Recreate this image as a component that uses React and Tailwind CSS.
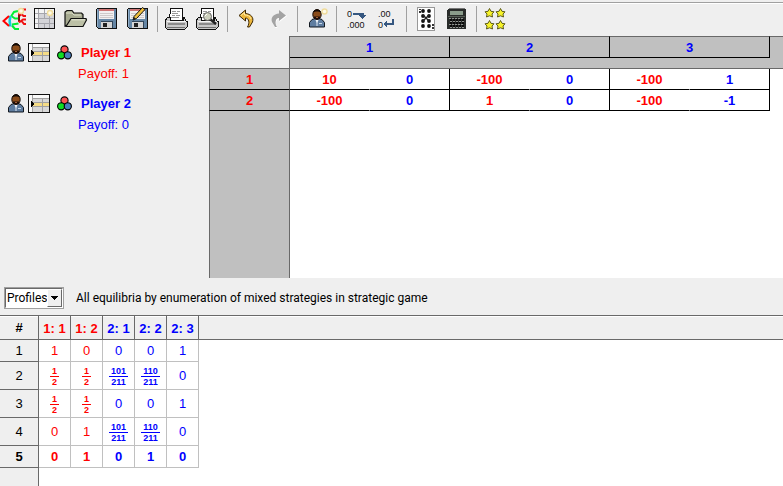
import React from "react";

function Icon({ children, w = 25, h = 25, crisp = true }) {
  return (
    <svg
      width={w}
      height={h}
      viewBox={`0 0 ${w} ${h}`}
      shapeRendering={crisp ? "crispEdges" : "auto"}
      className="block shrink-0"
      aria-hidden="true"
    >
      {children}
    </svg>
  );
}

const Spark = ({ x, y }) => (
  <g shapeRendering="auto">
    <circle cx={x} cy={y} r="3.200" fill="#f0dc9c" />
    <circle cx={x} cy={y} r="1.800" fill="#fffbe6" />
  </g>
);

const TreeIcon = () => (
  <Icon crisp={false}>
    <g fill="none" strokeWidth="2">
      <path d="M9 10.500 L12 6 L16 5 M10 10.500 L13 12.500 H16.500 M10 18.500 L16.500 17.500 M10 19.500 L13 23 H17" stroke="#0e3" />
      <path d="M8.500 10 C7.500 13 7.500 17 8.500 20.500" stroke="#1cd" strokeWidth="2.500" />
      <path d="M7 10 L1.500 15 L7 20" stroke="#f00" />
      <path d="M17 6 V16 M18 10 L20.500 3.500 H24 M20 8.500 L21.500 10 H24 M17 16.500 L21 13.500 H24 M20 15.500 L22 18 H24" stroke="#e11" />
      <path d="M17 9 V15" stroke="#5a1212" strokeWidth="1.500" />
    </g>
    <Spark x={19} y={5} />
  </Icon>
);

const TableIcon = () => (
  <Icon>
    <rect x="2" y="2" width="21" height="21" fill="#111" />
    <rect x="3" y="3" width="19" height="19" fill="#d4d4d8" />
    <path d="M3 3 h19 v4 h-19 z M3 8 h3 v14 h-3 z" fill="#f4f4f4" />
    <path d="M3 7.5 H22 M3 12.5 H22 M3 17.5 H22 M6.5 3 V22 M12.5 3 V12 M12.5 17 V22 M17.5 8 V22" stroke="#a5a5ab" />
    <Spark x={18} y={7} />
  </Icon>
);

const FolderIcon = () => (
  <Icon crisp={false}>
    <path d="M2 20 V6 L4 4.5 H9 L11 7 H18.5 L20 8.500 V13 Z" fill="#a6aa90" stroke="#111" strokeWidth="1.2" />
    <path d="M3 7 H9 L11 9 H18" stroke="#dfe2cc" fill="none" />
    <path d="M3 20.500 L8 12.500 H23 L23.500 14 L20 20.500 Z" fill="#bcc0a6" stroke="#111" strokeWidth="1.2" />
    <path d="M8.500 13.800 H22" stroke="#e6e9d8" />
  </Icon>
);

const Floppy = () => (
  <g>
    <path d="M3 2 H22 L23 3 V22 L22 23 H4 L2 21 V3 Z" fill="#111" />
    <path d="M3 3 H22 V22 H4 L3 21 Z" fill="#6687a6" />
    <path d="M3.5 3 V21" stroke="#92aec8" />
    <rect x="5" y="3" width="15" height="10" fill="#f2f0f0" />
    <rect x="5" y="3" width="15" height="2" fill="#cf7676" />
    <path d="M6 7.500 H19 M6 9.500 H19 M6 11.500 H19" stroke="#cfcaca" />
    <rect x="7" y="16" width="11" height="6" fill="#d6d6d6" />
    <rect x="9" y="17" width="4" height="4" fill="#222" />
    <path d="M18.5 16 V22 M7 15.5 H19" stroke="#32465a" />
  </g>
);

const SaveIcon = () => (
  <Icon>
    <Floppy />
  </Icon>
);

const SaveAsIcon = () => (
  <Icon>
    <Floppy />
    <g shapeRendering="auto">
      <path d="M8 14 L9 10.500 L17.500 1.500 L20 3.500 L11.500 12.500 Z" fill="#f0bf3c" stroke="#111" />
      <path d="M8 14 L9 11 L11 13 Z" fill="#222" />
    </g>
  </Icon>
);

const Printer = () => (
  <g>
    <path d="M7 2 H18 L19 14 H5 Z" fill="#fff" stroke="#111" />
    <path d="M8 5.5 H12 M13 5.5 H16 M8 7.5 H14 M8 9.5 H11 M12 9.5 H16 M7 11.5 H15" stroke="#999" />
    <path d="M4 11 H6 V14 H19 V11 H20 L22 15 H23 V21 L21 23 H3 L1 21 V15 Z" fill="#c8c8c8" stroke="#111" />
    <path d="M3 15.5 H22" stroke="#f5f5f5" />
    <rect x="4" y="17" width="17" height="2" fill="#8b8b8b" />
    <path d="M3 21.500 H21" stroke="#707070" />
  </g>
);

const PrintIcon = () => (
  <Icon>
    <Printer />
  </Icon>
);

const PreviewIcon = () => (
  <Icon>
    <Printer />
    <g shapeRendering="auto">
      <path d="M15 13 L21 18" stroke="#222" strokeWidth="2.500" />
      <circle cx="12.500" cy="10.500" r="4" fill="#cdd0bd" stroke="#666" />
      <path d="M10 10 L12 8" stroke="#fff" />
    </g>
  </Icon>
);

const UndoIcon = () => (
  <Icon crisp={false}>
    <path
      d="M5 9.500 L11.500 4 V7.500 C17 8 20 11.500 18.500 16 L15.500 21 H13.500 C16 17 15 12 11.500 12 V15 Z"
      fill="#edb73c"
      stroke="#3a2505"
    />
    <path d="M7 9.500 L10.500 6.500 V9 C14 9 16 10 17 13" stroke="#ffe9a0" fill="none" />
  </Icon>
);

const RedoIcon = () => (
  <Icon crisp={false}>
    <path d="M22 10 L14.500 4.500 V8 C9 8.500 6 12 7.500 17 L10.500 22 H12.500 C10 18 11 13 14.500 13 V16 Z" fill="#fff" />
    <path d="M21 9.500 L14 4 V7.500 C8.500 8 5.500 11.500 7 16 L10 21 H12 C9.500 17 10.500 12 14 12 V15 Z" fill="#a3a3a3" />
  </Icon>
);

const Person = () => (
  <g shapeRendering="auto">
    <path d="M0.500 18 V13.500 L3 10.500 L6 9.500 H10 L13 10.500 L15.500 13.500 V18 Z" fill="#5f7da0" stroke="#121820" />
    <path d="M6 10 L8 14 L10 10 Z" fill="#fff" />
    <path d="M8 11 V17" stroke="#dfe8f2" />
    <path d="M10 14.500 H13" stroke="#c8d8e8" />
    <ellipse cx="8" cy="5.500" rx="4.200" ry="5" fill="#8a4c1a" stroke="#140b06" />
    <path d="M4 3.500 C5 -0.500 11 -0.500 12 3.500 C10 2 6 2 4 3.500 Z" fill="#140b06" />
    <path d="M5 7.500 H11 V8.500 L9.500 10.500 H6.500 L5 8.500 Z" fill="#20100a" />
    <path d="M7 8.500 H9" stroke="#a55e35" />
  </g>
);

const NewPlayerIcon = () => (
  <Icon>
    <g transform="translate(5 3)">
      <Person />
    </g>
    <Spark x={20.5} y={5.5} />
  </Icon>
);

const MoreDecimalsIcon = () => (
  <Icon>
    <g fontFamily="'Liberation Sans', Arial, sans-serif" fontSize="9" fill="#111">
      <text x="4" y="11">0</text>
      <text x="4" y="22">.000</text>
    </g>
    <path d="M10 7.500 H19.500 V10" fill="none" stroke="#365780" strokeWidth="2" />
    <path d="M16 9 H23 L19.500 13 Z" fill="#365780" />
  </Icon>
);

const FewerDecimalsIcon = () => (
  <Icon>
    <g fontFamily="'Liberation Sans', Arial, sans-serif" fontSize="9" fill="#111">
      <text x="4" y="11">.00</text>
      <text x="4" y="22">0</text>
    </g>
    <path d="M19 13 V18 H12" fill="none" stroke="#365780" strokeWidth="2" />
    <path d="M9 18 L13 14.500 V21.500 Z" fill="#365780" />
  </Icon>
);

const CardIcon = () => (
  <Icon>
    <rect x="4" y="1" width="18" height="24" fill="#999" />
    <rect x="5" y="2" width="16" height="22" fill="#fff" />
    <g fill="#111" shapeRendering="auto">
      {[5, 10, 15, 20].map((y) => (
        <g key={y}>
          <circle cx="10" cy={y} r="1.900" />
          <circle cx="16" cy={y} r="1.900" />
        </g>
      ))}
      <path d="M10 9 L16 15 M16 9 L10 15" stroke="#222" strokeWidth="1.400" />
    </g>
    <path d="M6.5 3 V4 M6.5 5 V7 M19.5 18 V20 M19.5 21 V23" stroke="#333" strokeWidth="2" />
  </Icon>
);

const CalculatorIcon = () => (
  <Icon>
    <path d="M5 2 H21 L22 4 V23 H3 V4 Z" fill="#292c2a" />
    <path d="M5 2.500 H21" stroke="#777" />
    <rect x="6" y="5" width="13" height="4" fill="#8a9c8b" />
    <path d="M4 10.500 H21" stroke="#555e55" />
    <g fill="#8f938f">
      {[12, 15, 18, 21].map((y, r) =>
        [5, 8, 11, 14, 17].map((x) => <rect key={`${x}-${y}`} x={x + (r % 2)} y={y} width="2" height="1" />)
      )}
    </g>
    <g fill="#0a0a0a">
      {[13, 16, 19].map((y) =>
        [6, 9, 12, 15, 18].map((x) => <rect key={`${x}-${y}`} x={x} y={y} width="2" height="2" />)
      )}
    </g>
  </Icon>
);

const StarsIcon = () => (
  <Icon crisp={false}>
    {[[6.5, 7], [17.5, 7], [6.5, 19], [17.5, 19]].map(([x, y]) => (
      <path
        key={`${x}-${y}`}
        transform={`translate(${x} ${y})`}
        d="M0 -4.500 L1.500 -1.700 L4.500 -1.200 L2.500 1 L3 4 L0 2.800 L-3 4 L-2.500 1 L-4.500 -1.200 L-1.500 -1.700 Z"
        fill="#f7f32a"
        stroke="#4c4b10"
        strokeWidth="0.900"
      />
    ))}
  </Icon>
);

const groups = [
  [["New extensive game", TreeIcon], ["New strategic game", TableIcon], ["Open", FolderIcon], ["Save", SaveIcon], ["Save as", SaveAsIcon]],
  [["Print", PrintIcon], ["Print preview", PreviewIcon]],
  [["Undo", UndoIcon], ["Redo", RedoIcon]],
  [["Add player", NewPlayerIcon]],
  [["More decimals", MoreDecimalsIcon], ["Fewer decimals", FewerDecimalsIcon]],
  [["Reduced table", CardIcon], ["Compute equilibria", CalculatorIcon]],
  [["Quantal response", StarsIcon]],
];

function Toolbar() {
  return (
    <div className="mt-[2px] flex h-[34px] items-start border-t border-[#a0a0a0] shadow-[inset_0_1px_0_#fff]" role="toolbar">
      {groups.map((items, g) => (
        <React.Fragment key={g}>
          {g > 0 && <span className="mt-[3px] mr-[3px] ml-1 h-[26px] w-px shrink-0 bg-[#a0a0a0]" />}
          {items.map(([label, Glyph], i) => (
            <button
              key={label}
              type="button"
              aria-label={label}
              disabled={label === "Redo"}
              className={`flex h-[31px] shrink-0 items-center justify-center ${g === 0 && i === 0 ? "w-[29px]" : "w-[31px]"}`}
            >
              <Glyph />
            </button>
          ))}
        </React.Fragment>
      ))}
    </div>
  );
}

function Player({ name, payoff, color }) {
  return (
    <section className={`h-[51px] pl-2 ${color}`}>
      <div className="flex h-[22px] items-center">
        <button type="button" aria-label={`Remove ${name}`} className="mr-1">
          <Icon w={16} h={19}>
            <Person />
          </Icon>
        </button>
        <button type="button" aria-label={`Strategies of ${name} in rows`} className="mr-[7px]">
          <Icon w={22} h={19}>
            <rect width="22" height="19" fill="#111" />
            <rect x="1" y="1" width="20" height="17" fill="#d8d8d8" />
            <path d="M1 1 H21 V4 H1 Z M1 1 H4 V18 H1 Z" fill="#fafafa" />
            <rect x="5" y="9" width="16" height="3" fill="#f5dc86" />
            <path d="M4.500 1 V18 M4 4.500 H21 M4 8.500 H21 M4 12.500 H21 M14.500 5 V18" stroke="#a0a0a0" />
            <path d="M3 7 L6 10 L3 13 Z" fill="#000" />
          </Icon>
        </button>
        <button type="button" aria-label={`Color of ${name}`} className="mr-[9px]">
          <Icon w={15} h={15} crisp={false}>
            <g stroke="#000" strokeWidth="1.100">
              <circle cx="7.500" cy="4.500" r="3.600" fill="#f55" />
              <circle cx="4.200" cy="10.300" r="3.600" fill="#1d2" />
              <circle cx="10.800" cy="10.300" r="3.600" fill="#4a7dbb" />
            </g>
          </Icon>
        </button>
        <h2 className="pt-px font-bold">{name}</h2>
      </div>
      <p className="pt-px pl-[70px] leading-5">Payoff: {payoff}</p>
    </section>
  );
}

const payoffs = [
  ["1", ["10", "0", "-100", "0", "-100", "1"]],
  ["2", ["-100", "0", "1", "0", "-100", "-1"]],
];

function PayoffTable() {
  return (
    <div className="flex min-w-0 flex-1 flex-col overflow-hidden font-bold">
      <table className="w-full table-fixed border-separate border-spacing-0 text-center">
        <colgroup>
          <col className="w-[81px]" />
          {payoffs[0][1].map((_, i) => (
            <col key={i} className="w-20" />
          ))}
          <col />
        </colgroup>
        <thead>
          <tr className="h-[22px] text-[#0000ff]">
            <td rowSpan={2} className="border-r border-b border-[#696969] p-0" />
            {["1", "2", "3"].map((n) => (
              <th
                key={n}
                colSpan={2}
                scope="colgroup"
                className="border-t border-r border-b border-t-[#696969] border-r-black border-b-black bg-[#c0c0c0] p-0 pt-px leading-[19px]"
              >
                {n}
              </th>
            ))}
            <td className="border-t border-[#696969] bg-[#c0c0c0] p-0" />
          </tr>
          <tr className="h-[11px]">
            <td colSpan={7} className="border-b border-[#696969] bg-[#c0c0c0] p-0" />
          </tr>
        </thead>
        <tbody>
          {payoffs.map(([n, cells]) => (
            <tr key={n} className="h-[21px] bg-white">
              <th
                scope="row"
                className="border-r border-b border-l border-r-[#696969] border-b-black border-l-[#696969] bg-[#c0c0c0] p-0 pt-[2px] leading-[18px] text-[#ff0000]"
              >
                {n}
              </th>
              {cells.map((v, i) => (
                <td
                  key={i}
                  className={`border-r border-b border-b-black p-0 pt-[2px] leading-[18px] ${
                    i % 2 ? "border-r-black text-[#0000ff]" : "border-r-white text-[#ff0000]"
                  }`}
                >
                  {v}
                </td>
              ))}
              <td className="p-0" />
            </tr>
          ))}
        </tbody>
      </table>
      <div className="flex flex-1 bg-white">
        <div className="w-[81px] border-r border-l border-[#696969] bg-[#c0c0c0]" />
      </div>
    </div>
  );
}

const profiles = [
  ["1", ["1", "0", "0", "0", "1"]],
  ["2", ["1/2", "1/2", "101/211", "110/211", "0"]],
  ["3", ["1/2", "1/2", "0", "0", "1"]],
  ["4", ["0", "1", "101/211", "110/211", "0"]],
  ["5", ["0", "1", "0", "1", "0"]],
];

function Value({ v }) {
  const [num, den] = v.split("/");
  if (!den) return v;
  return (
    <span className="inline-flex flex-col items-center align-middle text-[9px] leading-[8px] font-bold">
      <span className="border-b border-current px-[2px] pb-px">{num}</span>
      <span className="pt-px">{den}</span>
    </span>
  );
}

function ProfilesTable() {
  return (
    <div className="flex flex-1 flex-col bg-white">
      <div className="flex border-y border-[#696969] bg-[#efefef] shadow-[inset_0_1px_0_#fff]">
        <div className="h-[23px]" />
      </div>
      <table className="-mt-6 w-[199px] table-fixed border-separate border-spacing-0 text-center">
        <colgroup>
          <col className="w-[39px]" />
          {[1, 2, 3, 4, 5].map((i) => (
            <col key={i} className="w-8" />
          ))}
        </colgroup>
        <thead>
          <tr className="h-6">
            <th className="border-r border-b border-[#696969] p-0">#</th>
            {["1: 1", "1: 2", "2: 1", "2: 2", "2: 3"].map((h) => (
              <th
                key={h}
                scope="col"
                className={`border-r border-b border-[#696969] p-0 pt-[2px] ${h[0] === "1" ? "text-[#ff0000]" : "text-[#0000ff]"}`}
              >
                {h}
              </th>
            ))}
          </tr>
        </thead>
        <tbody>
          {profiles.map(([n, cells]) => (
            <tr
              key={n}
              className={`${n === "1" || n === "5" ? "h-[22px]" : "h-7"} ${n === "5" ? "font-bold" : "font-normal"}`}
            >
              <th
                scope="row"
                className={`border-r border-b border-[#696969] bg-[#efefef] p-0 leading-5 ${n === "5" ? "font-bold" : "font-normal"}`}
              >
                {n}
              </th>
              {cells.map((v, i) => (
                <td
                  key={i}
                  className={`border-r border-b border-[#c0c0c0] p-0 leading-5 ${i < 2 ? "text-[#ff0000]" : "text-[#0000ff]"}`}
                >
                  <Value v={v} />
                </td>
              ))}
            </tr>
          ))}
        </tbody>
      </table>
      <div className="flex flex-1">
        <div className="w-[39px] border-r border-[#696969] bg-[#efefef]" />
      </div>
    </div>
  );
}

export default function App() {
  return (
    <main className="flex h-screen flex-col overflow-hidden bg-[#efefef] font-['Liberation_Sans',Arial,sans-serif] text-[13px] text-black">
      <Toolbar />
      <div className="flex h-[242px] shrink-0">
        <aside className="w-[209px] shrink-0 pt-[5px]">
          <Player name="Player 1" payoff="1" color="text-[#ff0000]" />
          <Player name="Player 2" payoff="0" color="text-[#0000ff]" />
        </aside>
        <PayoffTable />
      </div>
      <div className="flex h-[37px] shrink-0 items-center gap-3 pt-[3px] pl-1 font-[Roboto,'Open_Sans',sans-serif] text-[12px]">
        <div className="relative">
          <select
            aria-label="View"
            className="block h-[22px] w-[60px] appearance-none border-2 border-[#696969] border-r-white border-b-white bg-white pl-px text-[12px] leading-4 outline outline-1 -outline-offset-1 outline-[#a0a0a0]"
          >
            <option>Profiles</option>
          </select>
          <span className="pointer-events-none absolute top-[2px] right-[2px] flex h-[18px] w-[15px] items-center justify-center border border-white border-r-[#696969] border-b-[#696969] bg-[#efefef]">
            <svg width="7" height="4" viewBox="0 0 7 4" shapeRendering="crispEdges" aria-hidden="true">
              <path d="M0 0 H7 L3.500 4 Z" />
            </svg>
          </span>
        </div>
        <p>All equilibria by enumeration of mixed strategies in strategic game</p>
      </div>
      <ProfilesTable />
    </main>
  );
}
